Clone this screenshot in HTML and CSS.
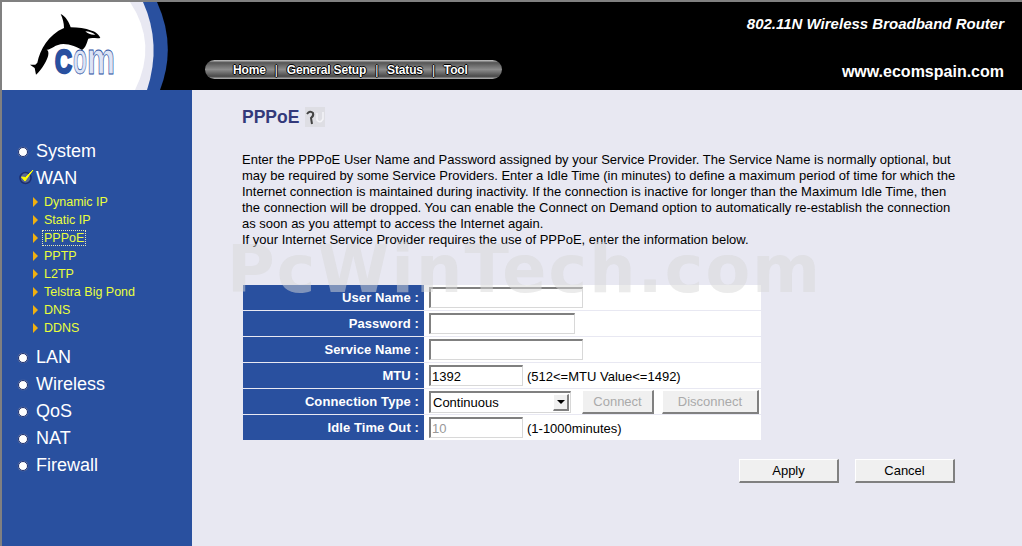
FILE: index.html
```html
<!DOCTYPE html>
<html lang="en">
<head>
<meta charset="utf-8">
<title>802.11N Wireless Broadband Router</title>
<link rel="stylesheet" href="styles.css">
</head>
<body>
<div class="page">
	<div class="head">
		<svg class="logo" viewBox="2 2 168 88" width="168" height="88">
			<path d="M157 2 Q177 46 160 90 L2 90 L2 2Z" fill="#29509f"/>
			<path d="M143 2 Q162 44 147 90 L2 90 L2 2Z" fill="#e8e8f2"/>
			<path d="M130 2 Q158 44 135 90 L2 90 L2 2Z" fill="#fff"/>
			<g transform="translate(20,8) scale(.3333)">
				<path d="M48 200 L44 180 L30 170 L46 170 L52 164 C60 125 85 80 132 60 C132 45 128 30 122 18 C138 25 148 45 152 58 C175 58 195 60 215 68 C230 72 238 82 241 90 C228 92 215 88 205 92 C200 105 198 118 186 126 C175 118 150 108 130 108 C105 108 90 128 80 125 C90 130 85 150 72 170 C65 182 55 195 48 200Z" fill="#000"/>
				<path d="M196 70 C208 70 218 74 226 80 C216 82 204 78 196 70Z" fill="#fff"/>
			</g>
			<text class="logo-c" x="55" y="73" textLength="17" lengthAdjust="spacingAndGlyphs">C</text>
			<text class="logo-om" x="73" y="74" textLength="14" lengthAdjust="spacingAndGlyphs">o</text>
			<text class="logo-om" x="87" y="74" textLength="28" lengthAdjust="spacingAndGlyphs">m</text>
		</svg>
		<div class="head-main">
			<div class="model">802.11N Wireless Broadband Router</div>
			<div class="head-row">
				<div class="nav">
					<a>Home</a><i>|</i><a>General Setup</a><i>|</i><a>Status</a><i>|</i><a>Tool</a>
				</div>
				<div class="site">www.ecomspain.com</div>
			</div>
		</div>
	</div>
	<div class="body">
		<div class="side">
			<div class="m"><span class="dot"></span>System</div>
			<div class="m"><svg class="chk" width="22" height="20" viewBox="0 0 22 20"><circle cx="7.500" cy="11" r="5.500" fill="#5a6a90" stroke="#1c2f70" stroke-width="1.500"/><path d="M3.500 10 L7 14 L15 3 L7.500 10.500Z" fill="#ff0" stroke="#ff0"/></svg>WAN</div>
			<div class="sub">
				<div class="s"><b></b><a>Dynamic IP</a></div>
				<div class="s"><b></b><a>Static IP</a></div>
				<div class="s"><b></b><a class="cur">PPPoE</a></div>
				<div class="s"><b></b><a>PPTP</a></div>
				<div class="s"><b></b><a>L2TP</a></div>
				<div class="s"><b></b><a>Telstra Big Pond</a></div>
				<div class="s"><b></b><a>DNS</a></div>
				<div class="s"><b></b><a>DDNS</a></div>
			</div>
			<div class="m"><span class="dot"></span>LAN</div>
			<div class="m"><span class="dot"></span>Wireless</div>
			<div class="m"><span class="dot"></span>QoS</div>
			<div class="m"><span class="dot"></span>NAT</div>
			<div class="m"><span class="dot"></span>Firewall</div>
		</div>
		<div class="main">
			<h1>PPPoE <svg class="help" width="20" height="20" viewBox="0 0 20 20"><rect width="20" height="20" fill="#dedee4"/><path d="M12 6 L12 13 Q15 17 18 12 L18 5" fill="none" stroke="#f4f4f8" stroke-width="1.500"/><path d="M2 7 Q5 3 8 6 Q9 9 6 11 L7 17" fill="none" stroke="#444" stroke-width="2"/></svg></h1>
			<p>Enter the PPPoE User Name and Password assigned by your Service Provider. The Service Name is normally optional, but<br>
			may be required by some Service Providers. Enter a Idle Time (in minutes) to define a maximum period of time for which the<br>
			Internet connection is maintained during inactivity. If the connection is inactive for longer than the Maximum Idle Time, then<br>
			the connection will be dropped. You can enable the Connect on Demand option to automatically re-establish the connection<br>
			as soon as you attempt to access the Internet again.<br>
			If your Internet Service Provider requires the use of PPPoE, enter the information below.</p>
			<div class="form">
				<div class="row"><label>User Name :</label><div class="val"><input class="w154" type="text"></div></div>
				<div class="row"><label>Password :</label><div class="val"><input class="w146" type="password"></div></div>
				<div class="row"><label>Service Name :</label><div class="val"><input class="w154" type="text"></div></div>
				<div class="row"><label>MTU :</label><div class="val"><input class="w94" type="text" value="1392"><span>(512&lt;=MTU Value&lt;=1492)</span></div></div>
				<div class="row"><label>Connection Type :</label><div class="val">
					<div class="sel"><select><option>Continuous</option></select><em><u></u></em></div>
					<button class="btn small b72" disabled>Connect</button>
					<button class="btn small b97" disabled>Disconnect</button>
				</div></div>
				<div class="row"><label>Idle Time Out :</label><div class="val"><input class="w94 off" type="text" value="10" disabled><span>(1-1000minutes)</span></div></div>
			</div>
			<div class="acts">
				<button class="btn">Apply</button>
				<button class="btn">Cancel</button>
			</div>
		</div>
	</div>
	<div class="wm">PcWinTech.com</div>
</div>
</body>
</html>
```
FILE: styles.css
```css
html,body {margin:0;padding:0;}
body {background:#e8e8f2;font-family:"Liberation Sans",Arial,sans-serif;font-size:13px;color:#000;}
.page {position:relative;height:544px;overflow:hidden;border-top:2px solid #808080;border-left:2px solid #808080;}

.head {display:flex;height:88px;background:#000;}
.logo {flex:none;display:block;}
.logo-c {font:bold 33px "Liberation Sans",sans-serif;fill:#29509f;stroke:#29509f;stroke-width:2.500;}
.logo-om {font:bold 45px "Liberation Sans",sans-serif;fill:#dde4f6;stroke:#29509f;stroke-width:.8;}
.head-main {flex:1;display:flex;flex-direction:column;padding:13px 18px 0 35px;color:#fff;}
.model {text-align:right;font-weight:bold;font-style:italic;font-size:15px;line-height:17px;}
.head-row {display:flex;justify-content:space-between;align-items:center;margin-top:28px;}
.site {font-weight:bold;font-size:16px;margin-top:3px;}

.nav {display:flex;align-items:center;box-sizing:border-box;width:297px;height:19px;margin-top:-2px;padding-left:28px;border-radius:10px;background:linear-gradient(#c8c8c8 0,#555 14%,#8c8c8c 50%,#4a4a4a 86%,#b8b8b8 100%);font-weight:bold;font-size:12px;letter-spacing:-.15px;color:#fff;text-shadow:1px 0 #000,-1px 0 #000,0 1px #000,0 -1px #000;}
.nav i {font-style:normal;font-weight:normal;margin:0 9px;}

.body {display:flex;height:456px;}
.side {flex:none;width:190px;box-sizing:border-box;padding-top:48px;background:#29509f;color:#fff;}
.m {display:flex;align-items:center;height:27px;padding-left:16px;font-size:18px;}
.dot {flex:none;width:8px;height:8px;margin-right:8px;border:1.500px solid #1c2f70;border-radius:50%;background:#fff;box-shadow:0 0 1px #99a;}
.chk {flex:none;margin:-4px -4px 0 0;}
.sub {padding-top:1px;margin-bottom:7px;}
.s {display:flex;align-items:center;height:18px;padding-left:31px;color:#eaff3c;font-size:12.500px;}
.s b {flex:none;width:0;height:0;margin-right:5px;border-left:5px solid #f0b010;border-top:5px solid transparent;border-bottom:5px solid transparent;}
.s a {padding:0 1px;outline-offset:0;}
.s a.cur {outline:1px dotted #e8e8b0;}

.main {flex:1;position:relative;padding-left:50px;}
h1 {display:flex;align-items:center;gap:6px;height:20px;margin:17px 0 0;font-size:17.500px;color:#33397a;}
p {margin:25px 0 0;font-size:13px;line-height:16px;white-space:nowrap;}

.form {width:518px;margin:37px 0 0 1px;background:#fff;}
.row {display:flex;height:25px;border-bottom:1px solid #e8e8f2;}
.row:last-child {border-bottom:none;height:25px;}
.row label {flex:none;width:176px;padding-right:5px;background:#29509f;color:#fff;font-weight:bold;font-size:13px;letter-spacing:.1px;line-height:26px;text-align:right;}
.val {display:flex;align-items:center;gap:4px;padding-left:5px;font-size:13px;}
.val span {margin-top:2px;}
input {box-sizing:border-box;height:21px;margin:0;padding:0 1px;font:13px "Liberation Sans",Arial,sans-serif;border-style:solid;border-width:2px 1px 1px 2px;border-color:#808080 #d8d8d8 #d8d8d8 #808080;background:#fff;border-radius:0;}
.w154 {width:154px;}
.w146 {width:146px;}
.w94 {width:94px;}
input.off {color:#999;background:#fff;}

.sel {display:flex;align-items:center;box-sizing:border-box;width:142px;height:22px;margin-right:7px;border-style:solid;border-width:2px 1px 1px 2px;border-color:#808080 #d8d8d8 #d8d8d8 #808080;background:#fff;}
.sel select {flex:1;min-width:0;height:100%;padding:0 0 0 2px;border:none;background:#fff;font:13px "Liberation Sans",Arial,sans-serif;appearance:none;outline:none;}
.sel em {flex:none;display:flex;align-items:center;justify-content:center;box-sizing:border-box;width:16px;height:17px;margin-right:1px;background:#f0f0f0;border-style:solid;border-width:1px 2px 2px 1px;border-color:#fff #808080 #808080 #fff;}
.sel u {width:0;height:0;border-top:4px solid #000;border-left:4px solid transparent;border-right:4px solid transparent;}

.btn {box-sizing:border-box;width:100px;height:24px;margin:0;padding:0;font:13px "Liberation Sans",Arial,sans-serif;color:#000;background:#f0f0f0;border-style:solid;border-width:1px 2px 2px 1px;border-color:#fff #808080 #808080 #fff;border-radius:0;}
.btn:disabled {color:#aaa;}
.small {flex:none;}
.b72 {width:72px;margin-right:4px;}
.b97 {width:97px;}
.acts {display:flex;justify-content:flex-end;gap:16px;margin-top:19px;padding-right:67px;}

.wm {position:absolute;left:225px;top:230px;font:bold 65px "DejaVu Sans",Verdana,sans-serif;letter-spacing:2.200px;color:rgba(216,216,216,.5);white-space:nowrap;pointer-events:none;}
```
